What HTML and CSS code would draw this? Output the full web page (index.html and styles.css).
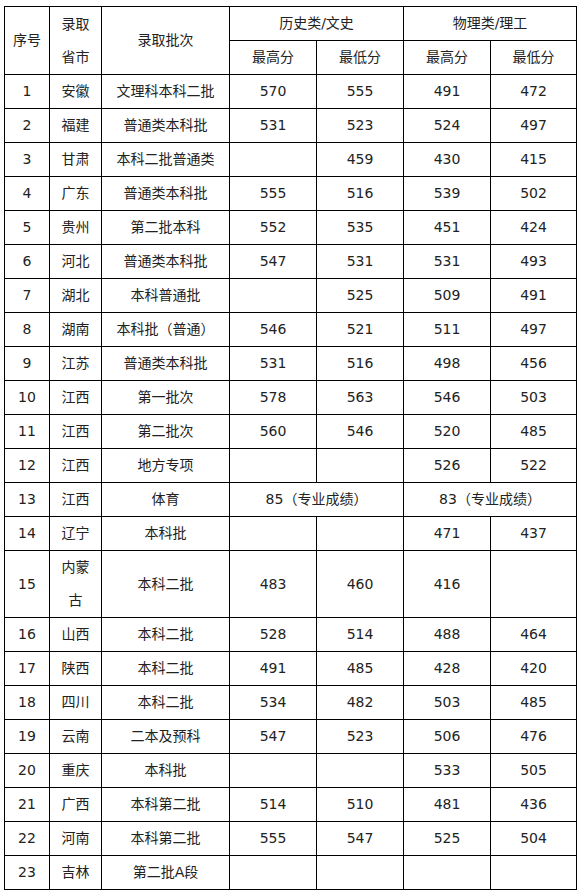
FILE: index.html
```html
<!DOCTYPE html>
<html lang="zh-CN">
<head>
<meta charset="utf-8">
<title>录取分数</title>
<link rel="stylesheet" href="styles.css">
</head>
<body>
<table class="score">
  <colgroup>
    <col class="c-no"><col class="c-prov"><col class="c-batch">
    <col class="c-s"><col class="c-s"><col class="c-s"><col class="c-s2">
  </colgroup>
  <thead>
    <tr>
      <td rowspan="2">序号</td>
      <td rowspan="2">录取省市</td>
      <td rowspan="2">录取批次</td>
      <td colspan="2">历史类/文史</td>
      <td colspan="2">物理类/理工</td>
    </tr>
    <tr>
      <td>最高分</td><td>最低分</td><td>最高分</td><td>最低分</td>
    </tr>
  </thead>
  <tbody>
    <tr><td>1</td><td>安徽</td><td>文理科本科二批</td><td>570</td><td>555</td><td>491</td><td>472</td></tr>
    <tr><td>2</td><td>福建</td><td>普通类本科批</td><td>531</td><td>523</td><td>524</td><td>497</td></tr>
    <tr><td>3</td><td>甘肃</td><td>本科二批普通类</td><td></td><td>459</td><td>430</td><td>415</td></tr>
    <tr><td>4</td><td>广东</td><td>普通类本科批</td><td>555</td><td>516</td><td>539</td><td>502</td></tr>
    <tr><td>5</td><td>贵州</td><td>第二批本科</td><td>552</td><td>535</td><td>451</td><td>424</td></tr>
    <tr><td>6</td><td>河北</td><td>普通类本科批</td><td>547</td><td>531</td><td>531</td><td>493</td></tr>
    <tr><td>7</td><td>湖北</td><td>本科普通批</td><td></td><td>525</td><td>509</td><td>491</td></tr>
    <tr><td>8</td><td>湖南</td><td>本科批（普通）</td><td>546</td><td>521</td><td>511</td><td>497</td></tr>
    <tr><td>9</td><td>江苏</td><td>普通类本科批</td><td>531</td><td>516</td><td>498</td><td>456</td></tr>
    <tr><td>10</td><td>江西</td><td>第一批次</td><td>578</td><td>563</td><td>546</td><td>503</td></tr>
    <tr><td>11</td><td>江西</td><td>第二批次</td><td>560</td><td>546</td><td>520</td><td>485</td></tr>
    <tr><td>12</td><td>江西</td><td>地方专项</td><td></td><td></td><td>526</td><td>522</td></tr>
    <tr><td>13</td><td>江西</td><td>体育</td><td colspan="2">85（专业成绩）</td><td colspan="2">83（专业成绩）</td></tr>
    <tr><td>14</td><td>辽宁</td><td>本科批</td><td></td><td></td><td>471</td><td>437</td></tr>
    <tr><td>15</td><td>内蒙古</td><td>本科二批</td><td>483</td><td>460</td><td>416</td><td></td></tr>
    <tr><td>16</td><td>山西</td><td>本科二批</td><td>528</td><td>514</td><td>488</td><td>464</td></tr>
    <tr><td>17</td><td>陕西</td><td>本科二批</td><td>491</td><td>485</td><td>428</td><td>420</td></tr>
    <tr><td>18</td><td>四川</td><td>本科二批</td><td>534</td><td>482</td><td>503</td><td>485</td></tr>
    <tr><td>19</td><td>云南</td><td>二本及预科</td><td>547</td><td>523</td><td>506</td><td>476</td></tr>
    <tr><td>20</td><td>重庆</td><td>本科批</td><td></td><td></td><td>533</td><td>505</td></tr>
    <tr><td>21</td><td>广西</td><td>本科第二批</td><td>514</td><td>510</td><td>481</td><td>436</td></tr>
    <tr><td>22</td><td>河南</td><td>本科第二批</td><td>555</td><td>547</td><td>525</td><td>504</td></tr>
    <tr><td>23</td><td>吉林</td><td>第二批A段</td><td></td><td></td><td></td><td></td></tr>
  </tbody>
</table>
</body>
</html>
```
FILE: styles.css
```css
html, body {
  margin: 0;
  padding: 0;
  background: #fff;
}

body {
  padding: 6px 0 0 4px;
}

.score {
  border-collapse: collapse;
  table-layout: fixed;
  width: 573px;
  font-family: "DejaVu Sans", "Noto Sans CJK SC", sans-serif;
  font-size: 14px;
  color: #222;
}

.c-no { width: 45px; }
.c-prov { width: 52px; }
.c-batch { width: 128px; }
.c-s { width: 87px; }
.c-s2 { width: 86px; }

.score td {
  border: 1px solid #000;
  padding: 0 6px;
  line-height: 33px;
  text-align: center;
  vertical-align: middle;
}
```
